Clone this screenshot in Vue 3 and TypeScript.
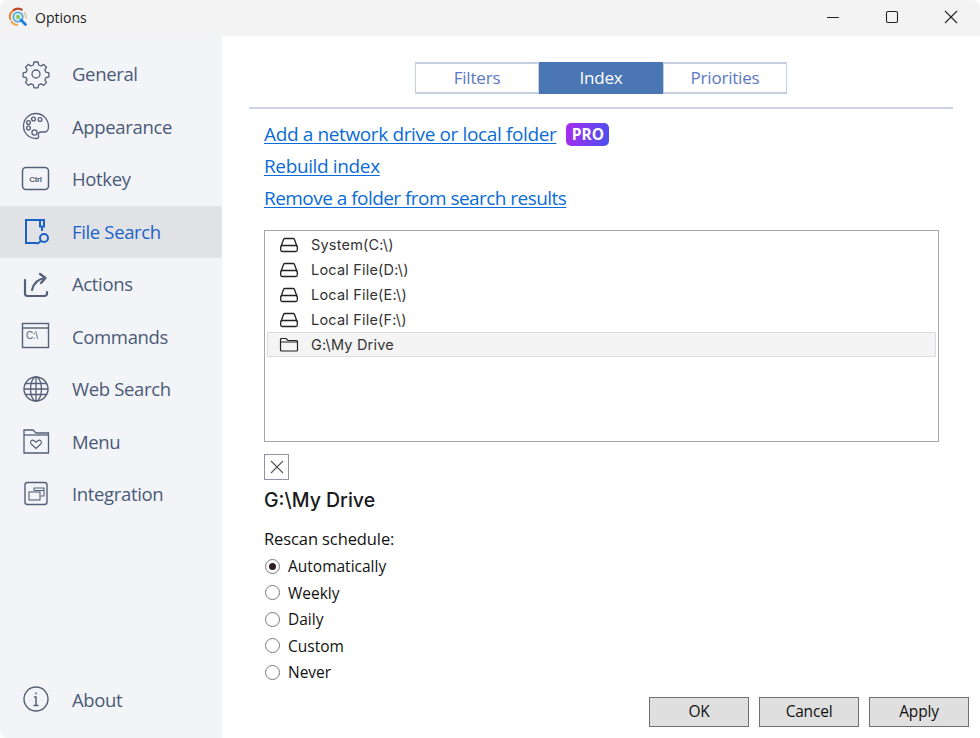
<template>
  <div class="window">
    <header class="titlebar">
      <div class="title">
        <svg class="logo" width="20" height="20" viewBox="0 0 20 20" fill="none">
          <path d="M2.500 13A8 8 0 0 1 5 3.700" stroke="#e0863a" stroke-width="2" />
          <path d="M5 3.700a8 8 0 0 1 9.500-.7" stroke="#b9482f" stroke-width="2.200" />
          <path d="M16 5a8 8 0 0 1 1.800 6.500" stroke="#d8c8a0" stroke-width="1.500" />
          <path d="M3 14a8 8 0 0 0 7 4" stroke="#eba557" stroke-width="2.200" />
          <circle cx="10" cy="10" r="4.800" fill="#c4e6ee" stroke="#52a5d2" stroke-width="1.600" />
          <circle cx="10" cy="10" r="1.900" fill="#8cc04a" />
          <path d="M13 13l4.500 4.500" stroke="#1f7fd8" stroke-width="2.800" stroke-linecap="round" />
        </svg>
        <span>Options</span>
      </div>
      <div class="controls">
        <svg width="14" height="14" viewBox="0 0 14 14"><path d="M1 7.500h12" stroke="#222" stroke-width="1" fill="none" /></svg>
        <svg width="14" height="14" viewBox="0 0 14 14"><rect x="1.500" y="1.500" width="11" height="11" rx="1.500" stroke="#222" stroke-width="1.100" fill="none" /></svg>
        <svg width="14" height="14" viewBox="0 0 14 14"><path d="M1 1l12 12M13 1L1 13" stroke="#222" stroke-width="1.100" fill="none" /></svg>
      </div>
    </header>

    <div class="body">
      <nav class="sidebar">
        <a v-for="item in navItems" :key="item.label" class="nav-item" :class="{ active: item.label === 'File Search' }">
          <span class="nav-icon">
            <svg width="30" height="30" viewBox="0 0 30 30" fill="none" stroke="currentColor" stroke-width="1.300">
              <template v-if="item.icon === 'gear'">
                <path d="M13 3.500h4l.7 3 2.300 1 2.700-1.600 2.800 2.800-1.600 2.700 1 2.300 3 .7v4l-3 .7-1 2.300 1.600 2.700-2.800 2.800-2.700-1.600-2.300 1-.7 3h-4l-.7-3-2.300-1-2.700 1.600-2.800-2.800 1.600-2.700-1-2.300-3-.7v-4l3-.7 1-2.300-1.600-2.700 2.800-2.800 2.700 1.600 2.300-1z" stroke-linejoin="round" transform="translate(0 -.5)" />
                <circle cx="15" cy="15" r="4" />
              </template>
              <template v-else-if="item.icon === 'palette'">
                <path d="M15 2.500C8 2.500 2.500 8 2.500 15S8 27.500 15 27.500c2.500 0 3-1.500 2.500-3-.6-1.800.2-3.500 2.500-3.500h3.500c2.500 0 4-2 4-5.500 0-7-5.500-13-12.500-13z" />
                <circle cx="12.500" cy="8" r="1.900" />
                <circle cx="19" cy="8.500" r="1.900" />
                <circle cx="7.500" cy="11.500" r="1.900" />
                <circle cx="7.500" cy="17" r="1.900" />
                <circle cx="13.500" cy="21.500" r="2.600" />
              </template>
              <template v-else-if="item.icon === 'ctrl'">
                <rect x="1.500" y="3.500" width="26" height="22" rx="3.500" stroke-width="1.500" />
                <text x="14.500" y="17.500" text-anchor="middle" class="icon-text" stroke="none" fill="currentColor">Ctrl</text>
              </template>
              <template v-else-if="item.icon === 'file'">
                <path d="M19 4H5v23h11" stroke-width="2" />
                <path d="M19 4h4v6.500h-4zM21 10.500v4.500" stroke-width="2" />
                <circle cx="23" cy="22" r="4" stroke-width="2" />
                <path d="M20 25l-4 3" stroke-width="2" />
              </template>
              <template v-else-if="item.icon === 'share'">
                <path d="M4 11v13.500a2.500 2.500 0 0 0 2.500 2.500h17a2.500 2.500 0 0 0 2.500-2.500V23" stroke-width="2.200" stroke-linecap="round" />
                <path d="M11 21c1.500-6.500 6-11 13-12" stroke-width="2.200" stroke-linecap="round" />
                <path d="M19 5l5.500 4L20 14" stroke-width="2.200" stroke-linecap="round" stroke-linejoin="round" />
              </template>
              <template v-else-if="item.icon === 'cmd'">
                <rect x="1.500" y="2.500" width="26" height="24" stroke-width="1.400" />
                <path d="M1.500 7h26" stroke-width="1.400" />
                <text x="5" y="17.500" class="icon-text cmd" stroke="none" fill="currentColor">C:\</text>
              </template>
              <template v-else-if="item.icon === 'globe'">
                <circle cx="15" cy="15" r="12" stroke-width="1.400" />
                <ellipse cx="15" cy="15" rx="5.500" ry="12" />
                <path d="M15 3v24M3 15h24M4.500 9.500h21M4.500 20.500h21" />
              </template>
              <template v-else-if="item.icon === 'folder'">
                <path d="M3 4h9l3 3h12.500v20H3z" stroke-width="1.300" />
                <path d="M3 9h24.500" />
                <path d="M15 22.500l-4.800-4.500c-2-2.200.8-5 3-3.200l1.800 1.400 1.800-1.400c2.200-1.800 5 1 3 3.200z" stroke-width="1.100" />
              </template>
              <template v-else-if="item.icon === 'window'">
                <rect x="4" y="3.500" width="22" height="22" rx="2.500" stroke-width="1.400" />
                <path d="M13 11.500V9h10v8h-3.500M13 11.500h10" stroke-width="1.100" />
                <rect x="8" y="13" width="11" height="8" stroke-width="1.100" />
              </template>
              <template v-else-if="item.icon === 'info'">
                <circle cx="15" cy="15" r="12" stroke-width="1.400" />
                <path d="M12.500 21.500h5M15 21.500V13h-2M15 8.500v1.800" stroke-width="1.500" />
              </template>
            </svg>
          </span>
          <span>{{ item.label }}</span>
        </a>
      </nav>

      <main class="content">
        <div class="tabs">
          <button v-for="tab in tabs" :key="tab" class="tab" :class="{ selected: tab === 'Index' }">{{ tab }}</button>
        </div>

        <section class="links">
          <div class="link-row">
            <a class="link">Add a network drive or local folder</a>
            <span class="pro">PRO</span>
          </div>
          <div class="link-row"><a class="link">Rebuild index</a></div>
          <div class="link-row"><a class="link tight">Remove a folder from search results</a></div>
        </section>

        <ul class="drives">
          <li v-for="d in drives" :key="d.name" class="drive" :class="{ current: d.folder }">
            <svg v-if="!d.folder" width="20" height="16" viewBox="0 0 20 16" fill="none" stroke="#222" stroke-width="1.300">
              <path d="M2 9.500L4.500 2.500a1.500 1.500 0 0 1 1.200-1h8.600a1.500 1.500 0 0 1 1.200 1L18 9.500" />
              <rect x="1.700" y="8.500" width="16.600" height="6" rx="1.500" />
            </svg>
            <svg v-else width="20" height="16" viewBox="0 0 20 16" fill="none" stroke="#222" stroke-width="1.200">
              <path d="M1.500 13V2.500a1 1 0 0 1 1-1h4.500l2 2h8.500a1 1 0 0 1 1 1V13a1 1 0 0 1-1 1h-15a1 1 0 0 1-1-1zM1.500 5h17" />
            </svg>
            <span>{{ d.name }}</span>
          </li>
        </ul>

        <button class="remove">
          <svg width="14" height="14" viewBox="0 0 14 14"><path d="M1 1l12 12M13 1L1 13" stroke="#555" stroke-width="1.100" fill="none" /></svg>
        </button>

        <h2 class="folder-name">G:\My Drive</h2>

        <p class="schedule-label">Rescan schedule:</p>
        <div class="radios">
          <label v-for="opt in schedules" :key="opt" class="radio">
            <span class="dot" :class="{ on: opt === 'Automatically' }"></span>
            {{ opt }}
          </label>
        </div>

        <footer class="actions">
          <button class="btn">OK</button>
          <button class="btn">Cancel</button>
          <button class="btn">Apply</button>
        </footer>
      </main>
    </div>
  </div>
</template>

<script setup lang="ts">
interface NavItem {
  label: string
  icon: string
}

const navItems: NavItem[] = [
  { label: 'General', icon: 'gear' },
  { label: 'Appearance', icon: 'palette' },
  { label: 'Hotkey', icon: 'ctrl' },
  { label: 'File Search', icon: 'file' },
  { label: 'Actions', icon: 'share' },
  { label: 'Commands', icon: 'cmd' },
  { label: 'Web Search', icon: 'globe' },
  { label: 'Menu', icon: 'folder' },
  { label: 'Integration', icon: 'window' },
  { label: 'About', icon: 'info' }
]

const tabs = ['Filters', 'Index', 'Priorities']

const drives = [
  { name: 'System(C:\\)', folder: false },
  { name: 'Local File(D:\\)', folder: false },
  { name: 'Local File(E:\\)', folder: false },
  { name: 'Local File(F:\\)', folder: false },
  { name: 'G:\\My Drive', folder: true }
]

const schedules = ['Automatically', 'Weekly', 'Daily', 'Custom', 'Never']
</script>

<style>
html, body { margin: 0; background: #fff; }
</style>

<style scoped>
.window {
  width: 980px;
  height: 738px;
  display: flex;
  flex-direction: column;
  overflow: hidden;
  border-radius: 8px;
  background: #fff;
  font-family: "Open Sans", "Noto Sans", sans-serif;
}

.titlebar {
  flex: 0 0 36px;
  display: flex;
  justify-content: space-between;
  align-items: center;
  background: #f3f3f3;
  padding: 0 22px 2px 8px;
  box-sizing: border-box;
}

.title {
  display: flex;
  align-items: center;
  gap: 7px;
  font-size: 14px;
  color: #1a1a1a;
}

.controls {
  display: flex;
  gap: 45px;
}

.controls svg {
  display: block;
}

.body {
  flex: 1;
  display: flex;
  min-height: 0;
}

.sidebar {
  flex: 0 0 222px;
  display: flex;
  flex-direction: column;
  padding-top: 12px;
  background: #f3f4f7;
}

.nav-item {
  flex: 0 0 52.500px;
  display: flex;
  align-items: center;
  gap: 21px;
  padding: 0 0 1px 21px;
  box-sizing: border-box;
  font-size: 18.500px;
  letter-spacing: -0.350px;
  color: #4a5a78;
}

.nav-item:last-child {
  margin-top: auto;
  margin-bottom: 12px;
}

.nav-item.active {
  background: #e1e2e6;
  color: #1b62c8;
}

.nav-icon {
  display: flex;
  color: #545f78;
}

.active .nav-icon {
  color: #1b62c8;
}

.icon-text {
  font: 700 8px "Liberation Sans", sans-serif;
}

.icon-text.cmd {
  font-weight: 400;
  font-size: 10px;
}

.content {
  position: relative;
  flex: 1;
  display: flex;
  flex-direction: column;
  padding: 26px 27px 0 27px;
  min-width: 0;
}

.tabs {
  display: flex;
  justify-content: center;
  padding-bottom: 13px;
  border-bottom: 2px solid #cdd3e4;
}

.tab {
  width: 124px;
  height: 32px;
  padding: 0 0 2px;
  border: 2px solid #c5cfe2;
  border-left-width: 1px;
  border-right-width: 1px;
  background: #fff;
  color: #5a78c4;
  font: 17px "Open Sans", sans-serif;
  letter-spacing: -0.200px;
}

.tab.selected {
  border-color: #4a76b4;
  background: #4a76b4;
  color: #fff;
}

.links {
  padding: 9px 0 0 15px;
}

.link-row {
  display: flex;
  align-items: center;
  gap: 10px;
  height: 32px;
}

.link {
  color: #0a6cd6;
  font-size: 19px;
  letter-spacing: -0.370px;
  text-decoration: underline;
  text-underline-offset: 2px;
}

.link.tight {
  letter-spacing: -0.540px;
}

.pro {
  display: flex;
  align-items: center;
  justify-content: center;
  width: 43px;
  height: 23px;
  border-radius: 5px;
  background: linear-gradient(100deg, #a82cf0, #4a50f0);
  color: #fff;
  font: 700 15.500px "Open Sans", sans-serif;
}

.drives {
  list-style: none;
  margin: 16px 14px 0 15px;
  padding: 1px 2px;
  height: 208px;
  border: 1px solid #a5a7b0;
}

.drive {
  display: flex;
  align-items: center;
  gap: 12px;
  height: 25px;
  padding-left: 12px;
  box-sizing: border-box;
  font: 14.500px Inter, sans-serif;
  letter-spacing: 0.200px;
  color: #333;
}

.drive.current {
  background: #f4f4f4;
  outline: 1px solid #dcdcdc;
  outline-offset: -1px;
}

.remove {
  display: flex;
  align-items: center;
  justify-content: center;
  width: 25px;
  height: 26px;
  margin: 12px 0 0 15px;
  padding: 0;
  border: 1px solid #8f93a3;
  background: #fff;
}

.folder-name {
  margin: 8px 0 0 15px;
  height: 24px;
  font: 450 19.500px/24px Inter, sans-serif;
  color: #1a1a1a;
}

.schedule-label {
  margin: 16px 0 0 15px;
  font-size: 16.500px;
  line-height: 22px;
  letter-spacing: -0.100px;
  color: #111;
}

.radios {
  display: flex;
  flex-direction: column;
  margin: 3px 0 0 16px;
}

.radio {
  display: flex;
  align-items: center;
  gap: 8px;
  height: 26.500px;
  font-size: 15.500px;
  color: #111;
}

.dot {
  width: 13px;
  height: 13px;
  border: 1px solid #7a7a80;
  border-radius: 50%;
  box-sizing: content-box;
  position: relative;
}

.dot.on::after {
  content: "";
  position: absolute;
  inset: 3px;
  border-radius: 50%;
  background: #2e1f24;
}

.actions {
  position: absolute;
  right: 11px;
  bottom: 11px;
  display: flex;
  gap: 10px;
}

.btn {
  width: 100px;
  height: 30px;
  padding: 0 0 2px;
  border: 1px solid #707070;
  background: #dfdfdf;
  color: #111;
  font: 15.500px "Open Sans", sans-serif;
  letter-spacing: -0.200px;
}
</style>
